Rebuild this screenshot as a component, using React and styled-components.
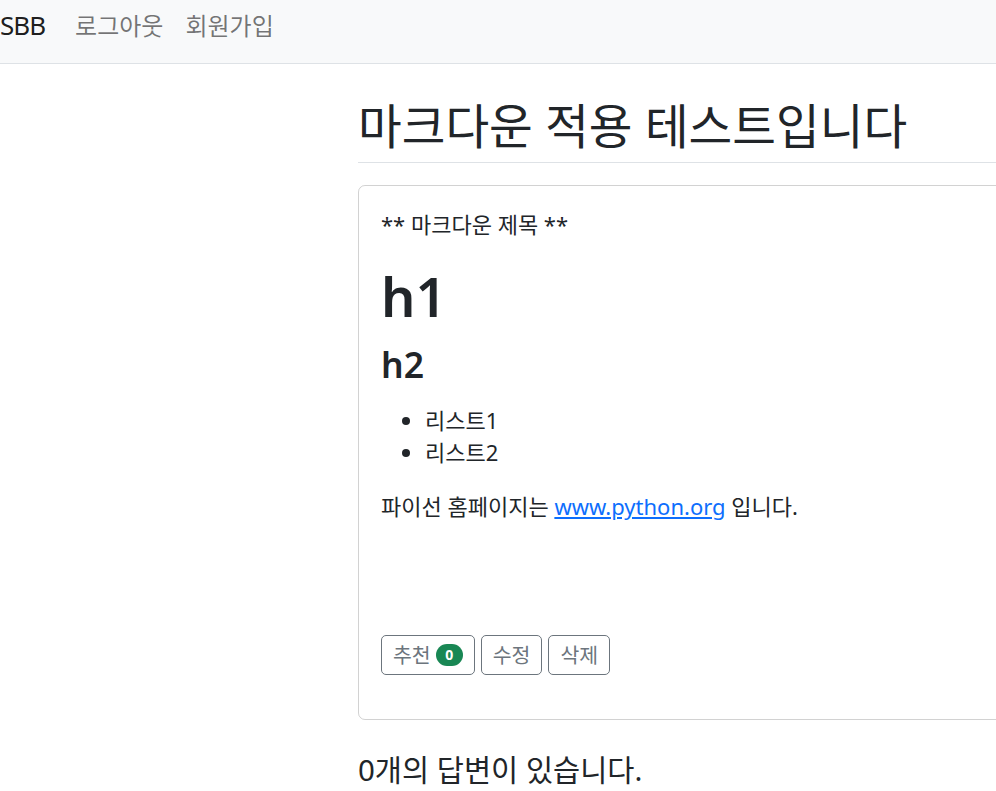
import React from "react";
import styled, { createGlobalStyle } from "styled-components";

const GlobalStyle = createGlobalStyle`
  html, body {
    margin: 0;
    padding: 0;
    overflow: hidden;
    background: #ffffff;
  }
  body {
    font-family: "Noto Sans", "Noto Sans CJK KR", sans-serif;
    font-size: 22px;
    line-height: 32px;
    color: #212529;
  }
  * { box-sizing: border-box; }
`;

const Navbar = styled.nav`
  height: 64px;
  background: #f8f9fa;
  border-bottom: 1px solid #dee2e6;
  display: flex;
  align-items: center;
  padding: 0 0 13px 0;
`;

const Brand = styled.a`
  font-size: 26px;
  line-height: 41px;
  color: rgba(0, 0, 0, 0.9);
  text-decoration: none;
  letter-spacing: -1px;
  margin-right: 19px;
`;

const NavList = styled.ul`
  display: flex;
  list-style: none;
  margin: 0;
  padding: 0;
`;

const NavLink = styled.a`
  display: block;
  padding: 0 11px;
  font-size: 24px;
  line-height: 33px;
  color: rgba(0, 0, 0, 0.55);
  text-decoration: none;
`;

const Main = styled.main`
  margin-left: 358px;
  width: 1100px;
`;

const Title = styled.h2`
  margin: 24px 0 22px;
  padding: 11px 0 10px;
  font-size: 47.5px;
  line-height: 53px;
  font-weight: 400;
  border-bottom: 1px solid #dee2e6;
`;

const Card = styled.div`
  border: 1px solid rgba(0, 0, 0, 0.175);
  border-radius: 7px;
  margin: 22px 0;
`;

const CardBody = styled.div`
  padding: 22px;
`;

const Para = styled.p`
  margin: 0 0 22px;
`;

const H1 = styled.h1`
  margin: 0 0 13px;
  font-size: 54px;
  line-height: 68px;
  font-weight: 600;
`;

const H2 = styled.h2`
  margin: 0 0 19px;
  font-size: 35.5px;
  line-height: 42px;
  font-weight: 600;
`;

const List = styled.ul`
  margin: 0 0 22px;
  padding-left: 44px;
`;

const Link = styled.a`
  color: #0d6efd;
  text-decoration: underline;
`;

const MetaRow = styled.div`
  height: 69px;
  display: flex;
  justify-content: flex-end;
`;

const ButtonRow = styled.div`
  display: flex;
  gap: 6px;
  margin: 22px 0;
`;

const OutlineButton = styled.a`
  display: inline-flex;
  align-items: center;
  gap: 5px;
  height: 40px;
  padding: 0 11px;
  border: 1px solid #6c757d;
  border-radius: 5px;
  color: #6c757d;
  font-size: 20.5px;
  line-height: 28px;
  text-decoration: none;
`;

const Badge = styled.span`
  display: inline-flex;
  align-items: center;
  justify-content: center;
  min-width: 27px;
  height: 22px;
  padding: 0 9px;
  border-radius: 11px;
  background: #198754;
  color: #ffffff;
  font-size: 14px;
  font-weight: 700;
  line-height: 1;
`;

const AnswerCount = styled.h5`
  margin: 22px 0;
  padding: 11px 0;
  font-size: 29.5px;
  line-height: 33px;
  font-weight: 400;
  border-bottom: 1px solid #dee2e6;
`;

export default function App() {
  return (
    <>
      <GlobalStyle />
      <Navbar>
        <Brand href="#">SBB</Brand>
        <NavList>
          <li><NavLink href="#">로그아웃</NavLink></li>
          <li><NavLink href="#">회원가입</NavLink></li>
        </NavList>
      </Navbar>
      <Main>
        <Title>마크다운 적용 테스트입니다</Title>
        <Card>
          <CardBody>
            <Para>** 마크다운 제목 **</Para>
            <H1>h1</H1>
            <H2>h2</H2>
            <List>
              <li>리스트1</li>
              <li>리스트2</li>
            </List>
            <Para>
              파이선 홈페이지는 <Link href="#">www.python.org</Link> 입니다.
            </Para>
            <MetaRow />
            <ButtonRow>
              <OutlineButton href="#">
                추천 <Badge>0</Badge>
              </OutlineButton>
              <OutlineButton href="#">수정</OutlineButton>
              <OutlineButton href="#">삭제</OutlineButton>
            </ButtonRow>
          </CardBody>
        </Card>
        <AnswerCount>0개의 답변이 있습니다.</AnswerCount>
      </Main>
    </>
  );
}
